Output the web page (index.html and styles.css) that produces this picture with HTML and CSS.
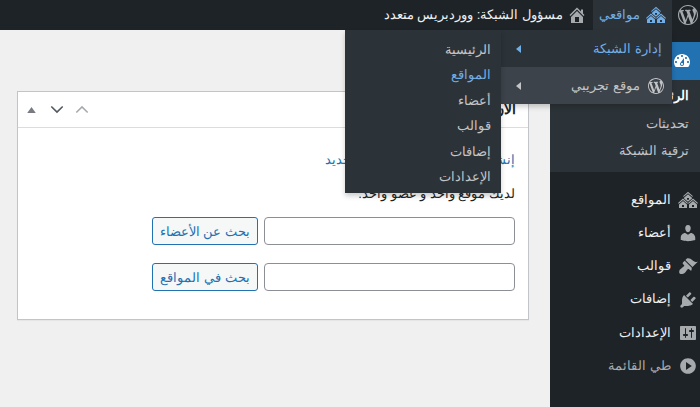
FILE: index.html
```html
<!DOCTYPE html>
<html lang="ar" dir="rtl">
<head>
<meta charset="utf-8">
<title>لوحة التحكم</title>
<link rel="stylesheet" href="styles.css">
</head>
<body>
<svg class="defs" width="0" height="0" aria-hidden="true">
  <symbol id="i-wp" viewBox="0 0 20 20"><path d="M20 10c0-5.51-4.49-10-10-10C4.48 0 0 4.49 0 10c0 5.52 4.48 10 10 10 5.51 0 10-4.48 10-10zM7.78 15.37L4.37 6.22c.55-.02 1.17-.08 1.17-.08.5-.06.44-1.13-.06-1.11 0 0-1.45.11-2.37.11-.18 0-.37 0-.58-.01C4.12 2.69 6.87 1.11 10 1.11c2.33 0 4.45.87 6.05 2.34-.68-.11-1.65.39-1.65 1.58 0 .74.45 1.36.9 2.1.35.61.55 1.36.55 2.46 0 1.49-1.4 5-1.4 5l-3.03-8.37c.54-.02.82-.17.82-.17.5-.05.44-1.25-.06-1.22 0 0-1.44.12-2.38.12-.87 0-2.33-.12-2.33-.12-.5-.03-.56 1.2-.06 1.22l.92.08 1.26 3.41zM17.41 10c.24-.64.74-1.87.43-4.25.7 1.29 1.05 2.71 1.05 4.25 0 3.29-1.73 6.24-4.4 7.78.97-2.59 1.94-5.2 2.92-7.78zM6.1 18.09C3.12 16.65 1.11 13.53 1.11 10c0-1.3.23-2.48.72-3.59C3.25 10.3 4.67 14.2 6.1 18.09zm4.03-6.63l2.58 6.98c-.86.29-1.76.45-2.71.45-.79 0-1.57-.11-2.29-.33.81-2.38 1.62-4.74 2.42-7.1z"/></symbol>
  <symbol id="i-home" viewBox="0 0 20 20"><path d="M16 8.5l1.53 1.53-1.06 1.06L10 4.62l-6.47 6.47-1.06-1.06L10 2.5l4 4v-2h2v4zm-6-2.46l6 5.99V18H4v-5.97zM12 17v-5H8v5h4z"/></symbol>
  <symbol id="i-sites" viewBox="0 0 20 20"><path d="M14.27 6.87L10 3.14 5.73 6.87 5 6.14l5-4.38 5 4.38zM14 8.42l-4.05 3.43L6 8.38v-.74l4-3.5 4 3.5v.78zM11 9.7V8H9v1.7h2zm-1.73 4.03L5 10 .73 13.73 0 13l5-4.38L10 13zm10 0L15 10l-4.27 3.73L10 13l5-4.38L20 13zM5 11l4 3.5V18H1v-3.5zm10 0l4 3.5V18h-8v-3.5zM6 17v-2H4v2h2zm10 0v-2h-2v2h2z"/></symbol>
  <symbol id="i-users" viewBox="0 0 20 20"><path d="M10 9.25c-2.27 0-2.73-3.44-2.73-3.44C7 4.02 7.82 2 9.97 2c2.16 0 2.98 2.02 2.71 3.81 0 0-.41 3.44-2.68 3.44zm0 2.57L12.72 10c2.39 0 4.52 2.33 4.52 4.53v2.49s-3.65 1.13-7.24 1.13c-3.65 0-7.24-1.13-7.24-1.13v-2.49c0-2.25 1.94-4.48 4.47-4.48z"/></symbol>
  <symbol id="i-brush" viewBox="0 0 20 20"><path d="M14.48 11.06L7.41 3.99l1.5-1.5c.5-.56 2.3-.47 3.51.32 1.21.8 1.43 1.28 2.91 2.1 1.18.64 2.45 1.26 4.45.85zm-.71.71L6.7 4.7 4.93 6.47c-.39.39-.39 1.02 0 1.41l1.06 1.06c.39.39.39 1.03 0 1.42-.6.6-1.43 1.11-2.21 1.69-.35.26-.7.53-1.01.84C1.43 13.23.78 15.78 1.4 17.15c.03.07.07.13.11.2.13.22.29.39.49.48 1.25.62 3.8-.03 5.13-1.36.31-.31.58-.66.84-1.01.58-.78 1.09-1.61 1.69-2.21.39-.39 1.03-.39 1.42 0l1.06 1.06c.39.39 1.02.39 1.41 0z"/></symbol>
  <symbol id="i-plug" viewBox="0 0 20 20"><path d="M13.11 4.36L9.87 7.6 8 5.73l3.24-3.24c.35-.34 1.05-.2 1.56.32.52.51.66 1.21.31 1.55zm-8 1.77l.91-1.12 9.01 9.01-1.19.84c-.71.71-2.63 1.16-3.82 1.16H6.14L4.9 17.26c-.59.59-1.54.59-2.12 0-.59-.58-.59-1.53 0-2.12l1.24-1.24v-3.88c0-1.13.4-3.19 1.09-3.89zm7.26 3.97l3.24-3.24c.34-.35 1.04-.21 1.55.31.52.51.66 1.21.31 1.55l-3.24 3.25z"/></symbol>
  <symbol id="i-settings" viewBox="0 0 20 20"><path d="M18 16V4c0-.55-.45-1-1-1H3c-.55 0-1 .45-1 1v12c0 .55.45 1 1 1h14c.55 0 1-.45 1-1zM8 11h1c.55 0 1 .45 1 1s-.45 1-1 1H8v1.5c0 .28-.22.5-.5.5s-.5-.22-.5-.5V13H6c-.55 0-1-.45-1-1s.45-1 1-1h1V5.5c0-.28.22-.5.5-.5s.5.22.5.5V11zm5-2h-1c-.55 0-1-.45-1-1s.45-1 1-1h1V5.5c0-.28.22-.5.5-.5s.5.22.5.5V7h1c.55 0 1 .45 1 1s-.45 1-1 1h-1v5.5c0 .28-.22.5-.5.5s-.5-.22-.5-.5V9z"/></symbol>
  <symbol id="i-collapse" viewBox="0 0 20 20"><path d="M10 2.16c4.33 0 7.84 3.51 7.84 7.84s-3.51 7.84-7.84 7.84S2.16 14.33 2.16 10 5.71 2.16 10 2.16zM8 6.12v7.76L13.82 10z"/></symbol>
  <symbol id="i-dash" viewBox="0 0 20 20"><path d="M3.76 16h12.48c1.1-1.37 1.76-3.11 1.76-5 0-4.42-3.58-8-8-8s-8 3.58-8 8c0 1.89.66 3.63 1.76 5zM10 4c.55 0 1 .45 1 1s-.45 1-1 1-1-.45-1-1 .45-1 1-1zM6 6c.55 0 1 .45 1 1s-.45 1-1 1-1-.45-1-1 .45-1 1-1zm8 0c.55 0 1 .45 1 1s-.45 1-1 1-1-.45-1-1 .45-1 1-1zm-5.37 5.55L12 7v6c0 1.1-.9 2-2 2s-2-.9-2-2c0-.57.24-1.08.63-1.45zM4 10c.55 0 1 .45 1 1s-.45 1-1 1-1-.45-1-1 .45-1 1-1zm12 0c.55 0 1 .45 1 1s-.45 1-1 1-1-.45-1-1 .45-1 1-1zm-5 3c0-.55-.45-1-1-1s-1 .45-1 1 .45 1 1 1 1-.45 1-1z"/></symbol>
</svg>

<header class="adminbar">
  <a class="bar-logo"><svg class="ico ico-20"><use href="#i-wp"/></svg></a>
  <a class="bar-item bar-item-open"><svg class="ico ico-20"><use href="#i-sites"/></svg><span>مواقعي</span></a>
  <a class="bar-item"><svg class="ico ico-20"><use href="#i-home"/></svg><span class="bar-title">مسؤول الشبكة: ووردبريس متعدد</span></a>
</header>

<div class="layout">
  <nav class="sidebar">
    <a class="menu-active"><svg class="ico ico-20"><use href="#i-dash"/></svg><span>الرئيسية</span></a>
    <ul class="submenu">
      <li class="submenu-current">الرئيسية</li>
      <li>تحديثات</li>
      <li>ترقية الشبكة</li>
    </ul>
    <ul class="menu">
      <li><svg class="ico ico-20"><use href="#i-sites"/></svg>المواقع</li>
      <li><svg class="ico ico-20"><use href="#i-users"/></svg>أعضاء</li>
      <li><svg class="ico ico-20"><use href="#i-brush"/></svg>قوالب</li>
      <li><svg class="ico ico-20"><use href="#i-plug"/></svg>إضافات</li>
      <li><svg class="ico ico-20"><use href="#i-settings"/></svg>الإعدادات</li>
      <li class="menu-collapse"><svg class="ico ico-20"><use href="#i-collapse"/></svg>طي القائمة</li>
    </ul>
  </nav>

  <main class="content">
    <section class="widget">
      <div class="widget-head">
        <h2 class="widget-title">الآن في الشبكة</h2>
        <div class="handles">
          <svg class="handle handle-up" viewBox="0 0 16 10"><path d="M1.5 8.5L8 2l6.5 6.5"/></svg>
          <svg class="handle handle-down" viewBox="0 0 16 10"><path d="M1.5 1.5L8 8l6.5-6.5"/></svg>
          <svg class="handle-tri" viewBox="0 0 10 7"><path d="M5 0l5 7H0z"/></svg>
        </div>
      </div>
      <div class="widget-body">
        <p class="links"><a>إنشاء موقع جديد</a> | <a>إنشاء عضو جديد</a></p>
        <p class="summary">لديك موقع واحد و عضو واحد.</p>
        <form class="search-row"><input class="field" type="text"><button class="btn" type="button">بحث عن الأعضاء</button></form>
        <form class="search-row"><input class="field" type="text"><button class="btn" type="button">بحث في المواقع</button></form>
      </div>
    </section>
  </main>
</div>

<div class="flyout">
  <div class="fly-row fly-row-blue"><span>إدارة الشبكة</span><i class="arrow"></i></div>
  <div class="fly-row fly-row-hover"><svg class="ico ico-16"><use href="#i-wp"/></svg><span>موقع تجريبي</span><i class="arrow"></i></div>
</div>
<ul class="flyout-sub">
  <li>الرئيسية</li>
  <li class="flyout-current">المواقع</li>
  <li>أعضاء</li>
  <li>قوالب</li>
  <li>إضافات</li>
  <li>الإعدادات</li>
</ul>
</body>
</html>
```
FILE: styles.css
```css
* { box-sizing: border-box; }
html, body { margin: 0; height: 100%; overflow: hidden; }
body {
  background: #f0f0f1;
  color: #1d2327;
  font: 13px/1.4 "Liberation Sans", sans-serif;
  position: relative;
}
.defs { position: absolute; }
ul { list-style: none; margin: 0; padding: 0; }
p { margin: 0; }
.ico { fill: currentColor; flex: none; }
.ico-20 { width: 20px; height: 20px; }
.ico-16 { width: 16px; height: 16px; }

/* admin bar */
.adminbar {
  height: 30px;
  background: #1d2327;
  color: #f0f0f1;
  display: flex;
  align-items: stretch;
}
.bar-logo {
  width: 28px;
  display: flex;
  align-items: center;
  justify-content: flex-start;
  padding-right: 2px;
  color: #a7aaad;
}
.bar-item {
  display: flex;
  align-items: center;
  gap: 4px;
  padding: 0 6px 0 8px;
  color: #f0f0f1;
}
.bar-item .ico { color: #a7aaad; }
.bar-item-open { background: #2c3338; color: #72aee6; width: 79px; gap: 6px; }
.bar-item-open .ico { color: #72aee6; }

/* layout */
.layout { display: flex; height: 377px; }
.sidebar {
  width: 150px;
  flex: none;
  background: #1d2327;
  padding-top: 12px;
  color: #f0f0f1;
}
.menu-active {
  height: 38px;
  background: #2271b1;
  color: #fff;
  display: flex;
  align-items: center;
  gap: 8px;
  padding-right: 8px;
}
.submenu {
  background: #2c3338;
  height: 92px;
  padding-top: 2px;
  color: #c3c4c7;
}
.submenu li { height: 27.5px; line-height: 27px; padding-right: 11px; }
.submenu-current { color: #fff; font-weight: 700; }
.menu { margin-top: 11px; }
.menu li {
  height: 33.3px;
  display: flex;
  align-items: center;
  gap: 7px;
  padding-right: 2px;
}
.menu .ico { color: #a7aaad; }
.menu .menu-collapse { color: #a7aaad; }

/* content */
.content { flex: 1; padding: 61px 21px 0 17px; }
.widget {
  height: 229px;
  background: #fff;
  border: 1px solid #c3c4c7;
  box-shadow: 0 1px 1px rgba(0,0,0,.04);
}
.widget-head {
  height: 36px;
  border-bottom: 1px solid #dcdcde;
  display: flex;
  align-items: center;
  justify-content: space-between;
  padding: 0 12px 0 9px;
}
.widget-title { margin: 0; font-size: 14px; font-weight: 700; }
.handles { display: flex; align-items: center; gap: 11px; }
.handle { width: 14px; height: 9px; fill: none; stroke-width: 1.8; }
.handle-up { stroke: #a7aaad; }
.handle-down { stroke: #50575e; }
.handle-tri { width: 9px; height: 6px; fill: #787c82; margin-right: 3px; }
.widget-body { padding: 0 13px 0 0; }
.links { padding-top: 23px; color: #50575e; height: 55px; }
.links a { color: #2271b1; }
.summary { margin-top: 2px; height: 32px; }
.search-row {
  display: flex;
  gap: 6px;
  margin-bottom: 18px;
}
.field {
  width: 251px;
  height: 28px;
  border: 1px solid #8c8f94;
  border-radius: 4px;
  background: #fff;
  padding: 0 8px;
  margin: 0;
}
.btn {
  width: 106px;
  height: 28px;
  border: 1px solid #2271b1;
  border-radius: 3px;
  background: #f6f7f7;
  color: #2271b1;
  font: 13px "Liberation Sans", sans-serif;
  padding: 0;
  margin: 0;
}

/* fly-outs */
.flyout {
  position: absolute;
  top: 30px;
  right: 28px;
  width: 171px;
  background: #2c3338;
  box-shadow: 0 3px 5px rgba(0,0,0,.2);
  color: #c3c4c7;
}
.fly-row {
  height: 37px;
  display: flex;
  align-items: center;
  gap: 8px;
  padding: 1px 10px 0 15px;
}
.fly-row .arrow {
  margin-right: auto;
  width: 0;
  height: 0;
  border-style: solid;
  border-width: 4px 5px 4px 0;
  border-color: transparent #c3c4c7 transparent transparent;
}
.fly-row-blue { color: #72aee6; }
.fly-row-blue .arrow { border-right-color: #72aee6; }
.fly-row-hover { background: #3c434a; color: #c3c4c7; padding-right: 8px; }
.flyout-sub {
  position: absolute;
  top: 30px;
  right: 199px;
  width: 156px;
  height: 163px;
  padding-top: 7px;
  background: #2c3338;
  box-shadow: 0 3px 5px rgba(0,0,0,.2);
  color: #c3c4c7;
}
.flyout-sub li { height: 25.4px; line-height: 25px; padding-right: 10px; }
.flyout-current { color: #72aee6; }
```
